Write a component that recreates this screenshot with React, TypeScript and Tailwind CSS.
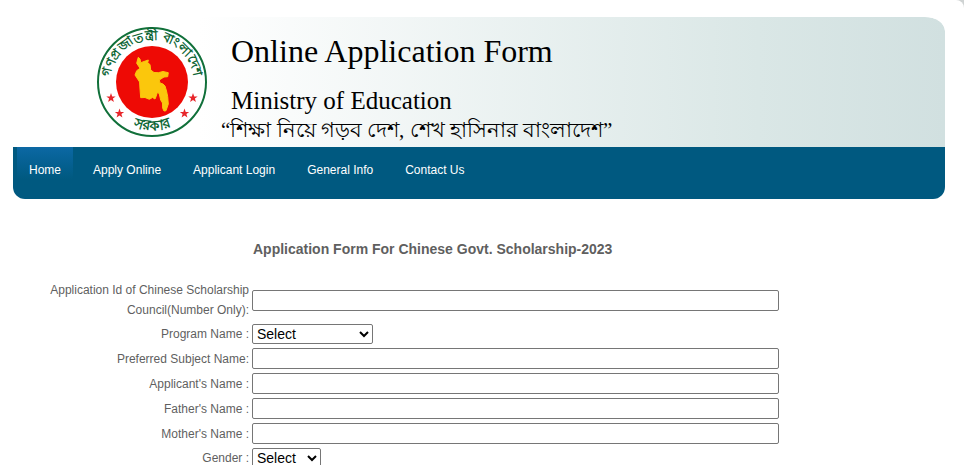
import React from 'react';

const navItems = ['Home', 'Apply Online', 'Applicant Login', 'General Info', 'Contact Us'];

type Field = {
    id: string;
    label: string;
    options?: string[];
    width?: string;
};

const fields: Field[] = [
    { id: 'application-id', label: 'Application Id of Chinese Scholarship Council(Number Only):' },
    { id: 'program', label: 'Program Name :', options: ['Select', 'Undergraduate', 'Masters', 'PhD'], width: 'w-[121px]' },
    { id: 'subject', label: 'Preferred Subject Name:' },
    { id: 'applicant', label: "Applicant's Name :" },
    { id: 'father', label: "Father's Name :" },
    { id: 'mother', label: "Mother's Name :" },
    { id: 'gender', label: 'Gender :', options: ['Select', 'Male', 'Female'], width: 'w-[69px]' },
];

const star = 'M0 -4.9 L1.2 -1.5 L4.7 -1.5 L1.9 0.6 L2.9 4 L0 1.9 L-2.9 4 L-1.9 0.6 L-4.7 -1.5 L-1.2 -1.5 Z';

function Emblem() {
    return (
        <svg viewBox="0 0 110 110" className="h-[110px] w-[110px] shrink-0" role="img" aria-label="Government seal">
            <defs>
                <path id="arc-top" d="M14.2 63 A41.6 41.6 0 1 1 95.8 63" />
                <path id="arc-bottom" d="M17 85 A48.5 48.5 0 0 0 93 85" />
            </defs>
            <circle cx="55" cy="55" r="54" fill="#fff" stroke="#11703a" strokeWidth="2" />
            <circle cx="55" cy="55" r="36" fill="#ee0a05" />
            <path
                d="M41.3 30.3 L43 32 L43.7 35.7 L47 34.5 L51.3 33 L50.7 36 L53 37.5 L53.7 43 L57 45.5 L61.3 45.7 L66 44.5 L71.3 45.7 L70.7 49.7 L67 50 L62.3 53 L63 56 L66 57 L68 59 L69.5 64 L70.7 69.7 L71.3 77 L69 83.7 L67 84 L65.7 81.3 L65.5 76 L63.7 73 L62.3 67 L60.5 65 L59 69.7 L58 72 L55.5 70.5 L52.3 72.3 L48 70.5 L43.7 70.7 L43 62 L42.6 55 L40 51 L38 48 L39.7 43.7 L43 41.3 L41.5 39 L39.7 36.3 L40.5 33 Z"
                fill="#fbc70c"
                stroke="#fbc70c"
                strokeWidth="1"
            />
            <g fill="#0d6635" textAnchor="middle" fontWeight="700">
                <text fontSize="13">
                    <textPath href="#arc-top" startOffset="50%">গণপ্রজাতন্ত্রী বাংলাদেশ</textPath>
                </text>
                <text fontSize="14">
                    <textPath href="#arc-bottom" startOffset="50%">সরকার</textPath>
                </text>
            </g>
            <g fill="#e8262b">
                <path d={star} transform="translate(14 71)" />
                <path d={star} transform="translate(22.5 86.5)" />
                <path d={star} transform="translate(96 71)" />
                <path d={star} transform="translate(87.5 86.5)" />
            </g>
        </svg>
    );
}

function Header() {
    return (
        <header className="overflow-hidden rounded-t-[20px_14px] rounded-b-[12px]">
            <div className="flex items-start gap-3.5 rounded-tr-[20px_14px] bg-linear-to-r from-white from-20% via-[#dae7e6] via-80% to-[#d1e0e0] pt-2.5 pb-2.5 pl-[84px]">
                <Emblem />
                <div className="font-['Liberation_Serif',serif] text-black">
                    <h1 className="pt-2 pl-2.5 text-[32px] leading-8">Online Application Form</h1>
                    <p className="pt-5 pl-2.5 text-[25px] leading-7">Ministry of Education</p>
                    <p className="h-[22px] text-[21px] leading-[30px] font-medium whitespace-nowrap">“শিক্ষা নিয়ে গড়ব দেশ, শেখ হাসিনার বাংলাদেশ”</p>
                </div>
            </div>
            <nav className="flex bg-[#005980] pb-1.5 text-xs text-white">
                {navItems.map((item, i) => (
                    <a
                        key={item}
                        href="#"
                        className={`mx-1 px-3 leading-[46px] ${i === 0 ? 'bg-linear-to-b from-[#0c68a4] to-[#005980] to-70%' : ''}`}
                    >
                        {item}
                    </a>
                ))}
            </nav>
        </header>
    );
}

function FormRow({ id, label, options, width }: Field) {
    return (
        <div className="flex items-center gap-[3px]">
            <label htmlFor={id} className="w-[201px] shrink-0 text-right">
                {label}
            </label>
            {options ? (
                <select id={id} className={`h-5 rounded-[2px] border border-[#767676] bg-white text-sm leading-4 text-black ${width}`}>
                    {options.map((option) => (
                        <option key={option}>{option}</option>
                    ))}
                </select>
            ) : (
                <input id={id} type="text" className="h-[21px] min-w-0 flex-1 rounded-[2px] border border-[#767676] bg-white px-1 text-sm text-black" />
            )}
        </div>
    );
}

export default function App() {
    return (
        <div className="bg-[#cfd3d3] font-['Liberation_Sans',Arial,sans-serif]">
            <div className="min-h-screen rounded-tr-lg bg-white pt-[17px] pr-[19px] pl-[13px]">
                <Header />
                <main className="pt-10 pr-[166px] pl-[35px] text-xs text-[#5f5f5f]">
                    <h2 className="pl-[205px] text-sm leading-5 font-bold">Application Form For Chinese Govt. Scholarship-2023</h2>
                    <form className="flex flex-col gap-1 pt-[21px] leading-5">
                        {fields.map((field) => (
                            <FormRow key={field.id} {...field} />
                        ))}
                    </form>
                </main>
            </div>
        </div>
    );
}
